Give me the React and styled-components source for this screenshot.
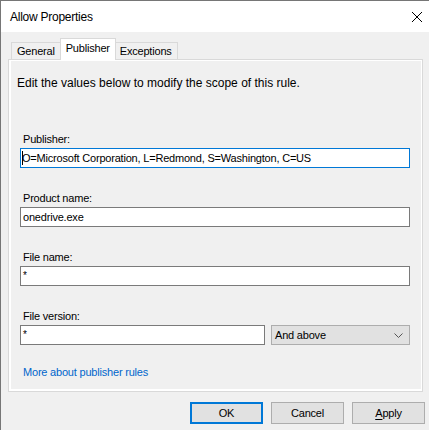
import React from "react"
import styled, { createGlobalStyle } from "styled-components"

const GlobalStyle = createGlobalStyle`
    html, body {
        margin: 0;
        padding: 0;
        background: #f0f0f0;
    }
    body {
        font-family: "Liberation Sans", Arial, sans-serif;
        font-size: 11px;
        letter-spacing: -0.2px;
        color: #000;
    }
`

const Window = styled.div`
    width: 428px;
    height: 429px;
    border-left: 1px solid #767676;
    border-top: 1px solid #767676;
    background: #f0f0f0;
    display: flex;
    flex-direction: column;
    overflow: hidden;
`

const TitleBar = styled.div`
    height: 31px;
    background: #fff;
    display: flex;
    align-items: center;
    justify-content: space-between;
    padding: 0 7px 0 9px;
    font-size: 12px;
    letter-spacing: -0.25px;
`

const CloseButton = styled.div`
    width: 10px;
    height: 10px;
    display: flex;
    & svg { display: block; }
`

const Body = styled.div`
    padding: 7px 0 0 7px;
    display: flex;
    flex-direction: column;
`

const TabStrip = styled.div`
    display: flex;
    align-items: flex-end;
    padding-left: 3px;
    height: 21px;
    position: relative;
    z-index: 1;
    margin-bottom: -1px;
`

const Tab = styled.div`
    box-sizing: border-box;
    height: ${p => (p.$active ? "22px" : "18px")};
    padding: 0 5px;
    margin: 0 ${p => (p.$active ? "-1px" : "0")};
    border: 1px solid #d9d9d9;
    border-bottom: ${p => (p.$active ? "none" : "1px solid #d9d9d9")};
    border-left: ${p => (p.$active || p.$first ? "1px solid #d9d9d9" : "none")};
    background: ${p => (p.$active ? "#fff" : "#f0f0f0")};
    display: flex;
    align-items: center;
    line-height: 16px;
    padding-bottom: ${p => (p.$active ? "4px" : "0")};
    position: relative;
    z-index: ${p => (p.$active ? 2 : 1)};
`

const Panel = styled.div`
    box-sizing: border-box;
    width: 415px;
    height: 333px;
    border: 1px solid #d9d9d9;
    box-shadow: inset 2px -2px 0 #fff, inset -1px 1px 0 #fff;
    padding: 15px 12px 0 8px;
    display: flex;
    flex-direction: column;
`

const Intro = styled.div`
    font-size: 12px;
    letter-spacing: 0;
    line-height: 16px;
    margin-bottom: 40px;
`

const Group = styled.div`
    display: flex;
    flex-direction: column;
    padding-left: 3px;
    margin-bottom: ${p => p.$gap ?? 22}px;
`

const Label = styled.div`
    line-height: 16px;
    padding-left: 3px;
    margin-bottom: 1px;
`

const Row = styled.div`
    display: flex;
    gap: 6px;
`

const TextBox = styled.div`
    box-sizing: border-box;
    position: relative;
    width: ${p => p.$width || "390px"};
    height: 20px;
    background: #fff;
    border: 1px solid ${p => (p.$focused ? "#0078d7" : "#7a7a7a")};
    padding-left: ${p => (p.$focused ? "1px" : "2px")};
    line-height: 18px;
    white-space: nowrap;
    overflow: hidden;
`

const Caret = styled.span`
    position: absolute;
    left: 1px;
    top: 2px;
    width: 1px;
    height: 14px;
    background: #000;
`

const Star = styled.span`
    font-size: 10px;
    vertical-align: 3px;
`

const Select = styled.div`
    box-sizing: border-box;
    width: 139px;
    height: 20px;
    background: #e1e1e1;
    border: 1px solid #adadad;
    padding: 0 6px 0 3px;
    display: flex;
    align-items: center;
    justify-content: space-between;
`

const Link = styled.a`
    color: #0066cc;
    text-decoration: none;
    line-height: 16px;
    padding-left: 6px;
`

const Buttons = styled.div`
    display: flex;
    justify-content: flex-end;
    gap: 8px;
    padding: 10px 4px 0 0;
`

const Button = styled.div`
    box-sizing: border-box;
    width: 73px;
    height: 22px;
    background: #e1e1e1;
    border: ${p => (p.$default ? "2px solid #0078d7" : "1px solid #adadad")};
    display: flex;
    align-items: center;
    justify-content: center;
    & u { text-decoration: underline; text-underline-offset: 2px; }
`

const Chevron = () => (
    <svg width="9" height="5" viewBox="0 0 9 5">
        <path d="M0.5 0.5 L4.5 4.5 L8.5 0.5" fill="none" stroke="#555" strokeWidth="1" />
    </svg>
)

const CloseIcon = () => (
    <svg width="10" height="10" viewBox="0 0 10 10">
        <path d="M0 0 L10 10 M10 0 L0 10" stroke="#000" strokeWidth="1" />
    </svg>
)

const App = () => (
    <>
        <GlobalStyle />
        <Window>
            <TitleBar>
                <span>Allow Properties</span>
                <CloseButton><CloseIcon /></CloseButton>
            </TitleBar>
            <Body>
                <TabStrip>
                    <Tab $first>General</Tab>
                    <Tab $active>Publisher</Tab>
                    <Tab>Exceptions</Tab>
                </TabStrip>
                <Panel>
                    <Intro>Edit the values below to modify the scope of this rule.</Intro>
                    <Group>
                        <Label>Publisher:</Label>
                        <TextBox $focused>
                            <Caret />
                            O=Microsoft Corporation, L=Redmond, S=Washington, C=US
                        </TextBox>
                    </Group>
                    <Group>
                        <Label>Product name:</Label>
                        <TextBox>onedrive.exe</TextBox>
                    </Group>
                    <Group>
                        <Label>File name:</Label>
                        <TextBox><Star>*</Star></TextBox>
                    </Group>
                    <Group $gap={19}>
                        <Label>File version:</Label>
                        <Row>
                            <TextBox $width="245px"><Star>*</Star></TextBox>
                            <Select>
                                <span>And above</span>
                                <Chevron />
                            </Select>
                        </Row>
                    </Group>
                    <Link href="#">More about publisher rules</Link>
                </Panel>
                <Buttons>
                    <Button $default>OK</Button>
                    <Button>Cancel</Button>
                    <Button><span><u>A</u>pply</span></Button>
                </Buttons>
            </Body>
        </Window>
    </>
)

export default App
